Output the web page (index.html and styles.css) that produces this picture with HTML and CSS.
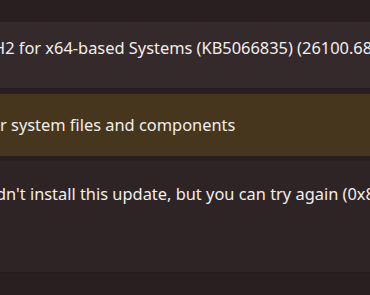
FILE: index.html
```html
<!DOCTYPE html>
<html>
<head>
<meta charset="utf-8">
<link rel="stylesheet" href="styles.css">
</head>
<body>
<div class="page">
  <div class="card card-update">
    <span class="text t1">H2 for x64-based Systems (KB5066835) (26100.6899)</span>
  </div>
  <div class="card card-status">
    <span class="text t2">r system files and components</span>
  </div>
  <div class="card card-error">
    <span class="text t3">dn't install this update, but you can try again (0x800f0922)</span>
  </div>
</div>
</body>
</html>
```

FILE: styles.css
```css
html, body {
  margin: 0;
  padding: 0;
  background: #2a1f20;
  width: 370px;
  height: 295px;
  overflow: hidden;
}
.page {
  display: flex;
  flex-direction: column;
  gap: 5px;
  padding-top: 22px;
  font-family: "Noto Sans", "Open Sans", sans-serif;
  color: #f2eeee;
  font-size: 16.4px;
  line-height: 22px;
}
.card {
  display: flex;
  align-items: flex-start;
  white-space: nowrap;
  overflow: hidden;
  box-sizing: border-box;
}
.card-update {
  height: 67px;
  background: #352a2b;
  border-bottom: 1px solid #241b1c;
  padding-top: 15px;
}
.card-status {
  height: 62px;
  background: #45361d;
  padding-top: 20px;
}
.card-error {
  height: 112px;
  background: #2f2425;
  border-bottom: 1px solid #261c1d;
  padding-top: 22px;
}
.t1 { margin-left: -7px; }
.t2 { margin-left: 0; }
.t3 { margin-left: -4px; }
```
